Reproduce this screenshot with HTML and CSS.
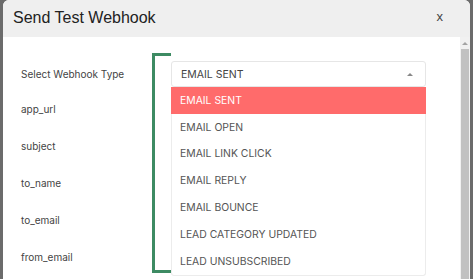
FILE: index.html
```html
<!DOCTYPE html>
<html>
<head>
<meta charset="utf-8">
<link rel="stylesheet" href="styles.css">
</head>
<body>
<div class="modal">
  <div class="modal-header">
    <h1 class="title">Send Test Webhook</h1>
    <span class="close">x</span>
  </div>
  <div class="modal-body">
    <div class="form">
      <div class="row row-first">
        <label class="label">Select Webhook Type</label>
        <div class="select-wrap">
          <div class="bracket"></div>
          <div class="select">
            <span>EMAIL SENT</span>
            <span class="caret"></span>
          </div>
          <ul class="menu">
            <li class="item active">EMAIL SENT</li>
            <li class="item">EMAIL OPEN</li>
            <li class="item">EMAIL LINK CLICK</li>
            <li class="item">EMAIL REPLY</li>
            <li class="item">EMAIL BOUNCE</li>
            <li class="item">LEAD CATEGORY UPDATED</li>
            <li class="item">LEAD UNSUBSCRIBED</li>
          </ul>
        </div>
      </div>
      <div class="row"><label class="label">app_url</label></div>
      <div class="row"><label class="label">subject</label></div>
      <div class="row"><label class="label">to_name</label></div>
      <div class="row"><label class="label">to_email</label></div>
      <div class="row"><label class="label">from_email</label></div>
    </div>
    <div class="scrollbar">
      <span class="sb-arrow"></span>
      <div class="sb-thumb"></div>
    </div>
  </div>
</div>
</body>
</html>
```
FILE: styles.css
```css
html, body {
  margin: 0;
  padding: 0;
  height: 100%;
  overflow: hidden;
}
body {
  background: #6b6b6b;
  font-family: Inter, "Liberation Sans", sans-serif;
}
.modal {
  margin-left: 3px;
  width: 467px;
  height: 279px;
  background: #ffffff;
  border-radius: 6px 6px 0 0;
  overflow: hidden;
  display: flex;
  flex-direction: column;
}
.modal-header {
  height: 37px;
  flex: none;
  background: #efefef;
  display: flex;
  align-items: center;
  justify-content: space-between;
  padding: 0 27px 0 10px;
}
.title {
  margin: 0;
  font-family: "Liberation Sans", Arial, sans-serif;
  font-weight: 400;
  font-size: 16px;
  color: #222;
  position: relative;
  top: -1px;
}
.close {
  font-family: "Liberation Sans", Arial, sans-serif;
  font-size: 13px;
  color: #444;
  position: relative;
  top: -2px;
}
.modal-body {
  flex: 1;
  display: flex;
  min-height: 0;
}
.form {
  flex: 1;
  padding: 21px 0 0 18px;
  display: flex;
  flex-direction: column;
}
.row {
  height: 37px;
  flex: none;
  display: flex;
  align-items: center;
}
.row-first {
  height: 32px;
}
.label {
  width: 150px;
  font-size: 10px;
  color: #444;
}
.select-wrap {
  position: relative;
  width: 255px;
}
.select {
  height: 26px;
  box-sizing: border-box;
  border: 1px solid #e6e6e6;
  border-radius: 3px;
  display: flex;
  align-items: center;
  justify-content: space-between;
  padding: 0 12px 0 9px;
  font-size: 10.5px;
  color: #444;
}
.caret {
  width: 0;
  height: 0;
  border-left: 3.5px solid transparent;
  border-right: 3.5px solid transparent;
  border-bottom: 3.5px solid #888;
}
.menu {
  position: absolute;
  top: 26px;
  left: 0;
  width: 255px;
  margin: 0;
  padding: 0;
  list-style: none;
  background: #fff;
  border: 1px solid #ececec;
  border-top: none;
  box-sizing: border-box;
  border-radius: 0 0 3px 3px;
}
.item {
  height: 26.8px;
  display: flex;
  align-items: center;
  padding-left: 8px;
  font-size: 10.4px;
  color: #555;
}
.item.active {
  background: #ff6b6b;
  color: #fff;
  margin: 0 -1px;
  padding-left: 9px;
}
.bracket {
  position: absolute;
  left: -19px;
  top: -8px;
  width: 16px;
  height: 214px;
  border: 3px solid #3d8b63;
  border-right: none;
}
.scrollbar {
  width: 10px;
  flex: none;
  background: #f1f1f1;
  display: flex;
  flex-direction: column;
  align-items: center;
}
.sb-arrow {
  margin-top: 5px;
  width: 0;
  height: 0;
  border-left: 3px solid transparent;
  border-right: 3px solid transparent;
  border-bottom: 3px solid #a3a3a3;
}
.sb-thumb {
  margin-top: 4px;
  width: 8px;
  flex: 1;
  background: #c1c1c1;
}
```
